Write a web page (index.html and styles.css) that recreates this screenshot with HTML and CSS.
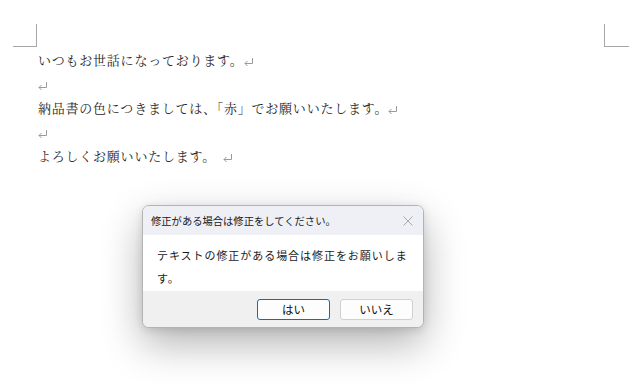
FILE: index.html
```html
<!DOCTYPE html>
<html lang="ja">
<head>
<meta charset="utf-8">
<link rel="stylesheet" href="styles.css">
</head>
<body>
<div class="page">
  <div class="marks">
    <div class="mark mark-left"></div>
    <div class="mark mark-right"></div>
  </div>
  <div class="doc">
    <p class="line">いつもお世話になっております。<svg class="ret" width="10" height="8" viewBox="0 0 10 8"><path d="M8.5 0 V5.5 H1 M3.5 3 L1 5.5 L3.5 8" stroke="#9a9a9a" stroke-width="1" fill="none"/></svg></p>
    <p class="line"><svg class="ret first" width="10" height="8" viewBox="0 0 10 8"><path d="M8.5 0 V5.5 H1 M3.5 3 L1 5.5 L3.5 8" stroke="#9a9a9a" stroke-width="1" fill="none"/></svg></p>
    <p class="line">納品書の色につきましては、「赤」でお願いいたします。<svg class="ret" width="10" height="8" viewBox="0 0 10 8"><path d="M8.5 0 V5.5 H1 M3.5 3 L1 5.5 L3.5 8" stroke="#9a9a9a" stroke-width="1" fill="none"/></svg></p>
    <p class="line"><svg class="ret first" width="10" height="8" viewBox="0 0 10 8"><path d="M8.5 0 V5.5 H1 M3.5 3 L1 5.5 L3.5 8" stroke="#9a9a9a" stroke-width="1" fill="none"/></svg></p>
    <p class="line">よろしくお願いいたします。<svg class="ret wide" width="10" height="8" viewBox="0 0 10 8"><path d="M8.5 0 V5.5 H1 M3.5 3 L1 5.5 L3.5 8" stroke="#9a9a9a" stroke-width="1" fill="none"/></svg></p>
  </div>
</div>

<div class="dialog">
  <div class="dlg-head">
    <span class="dlg-title">修正がある場合は修正をしてください。</span>
    <svg class="dlg-close" width="10" height="10" viewBox="0 0 10 10"><path d="M0.5 0.5 L9.5 9.5 M9.5 0.5 L0.5 9.5" stroke="#a9a9ad" stroke-width="1" fill="none"/></svg>
  </div>
  <div class="dlg-body">テキストの修正がある場合は修正をお願いします。</div>
  <div class="dlg-foot">
    <button class="btn btn-primary">はい</button>
    <button class="btn">いいえ</button>
  </div>
</div>
</body>
</html>
```

FILE: styles.css
```css
html, body {
  margin: 0;
  padding: 0;
  background: #ffffff;
}
body {
  width: 629px;
  height: 385px;
  overflow: hidden;
  position: relative;
  font-family: "Noto Serif CJK JP", "Noto Sans CJK JP", serif;
}
.page {
  padding-top: 24px;
}
.marks {
  display: flex;
  justify-content: space-between;
  height: 23px;
}
.mark {
  box-sizing: border-box;
  height: 23px;
  border-bottom: 1px solid #a6a6a6;
}
.mark-left {
  width: 24px;
  margin-left: 13px;
  border-right: 1px solid #a6a6a6;
}
.mark-right {
  width: 25px;
  border-left: 1px solid #a6a6a6;
}
.doc {
  padding-left: 38px;
  padding-top: 1px;
}
.line {
  margin: 0;
  height: 24px;
  line-height: 24px;
  font-size: 13px;
  letter-spacing: 0.77px;
  color: #262626;
  white-space: nowrap;
}
.ret {
  display: inline-block;
  vertical-align: -1px;
  margin-left: 0;
}
.ret.first {
  margin-left: 0;
}
.ret.wide {
  margin-left: 7px;
}

.dialog {
  position: absolute;
  left: 142px;
  top: 205px;
  width: 282px;
  height: 123px;
  box-sizing: border-box;
  border: 1px solid #b4b4b4;
  border-radius: 7px;
  overflow: hidden;
  background: #ffffff;
  box-shadow: 0 16px 40px rgba(0, 0, 0, 0.3), 0 2px 8px rgba(0, 0, 0, 0.12);
  font-family: "Noto Sans CJK JP", sans-serif;
  display: flex;
  flex-direction: column;
}
.dlg-head {
  height: 29px;
  background: #eff0f6;
  display: flex;
  align-items: center;
  justify-content: space-between;
  padding: 0 10px 0 8px;
}
.dlg-title {
  font-size: 10.3px;
  color: #1a1a1a;
}
.dlg-body {
  height: 56px;
  box-sizing: border-box;
  padding: 9px 12px 0 14px;
  font-size: 11px;
  letter-spacing: 0.95px;
  line-height: 23px;
  color: #1a1a1a;
}
.dlg-foot {
  flex: 1;
  background: #f0f0f0;
  display: flex;
  justify-content: flex-end;
  align-items: flex-start;
  gap: 10px;
  padding: 8px 10px 0 0;
}
.btn {
  width: 73px;
  height: 21px;
  box-sizing: border-box;
  border: 1px solid #d0d0d0;
  border-radius: 3px;
  background: #fdfdfd;
  font-family: "Noto Sans CJK JP", sans-serif;
  font-size: 11.5px;
  color: #111;
  padding: 0;
  line-height: 19px;
}
.btn-primary {
  border-color: #0a6cc4;
}
```
